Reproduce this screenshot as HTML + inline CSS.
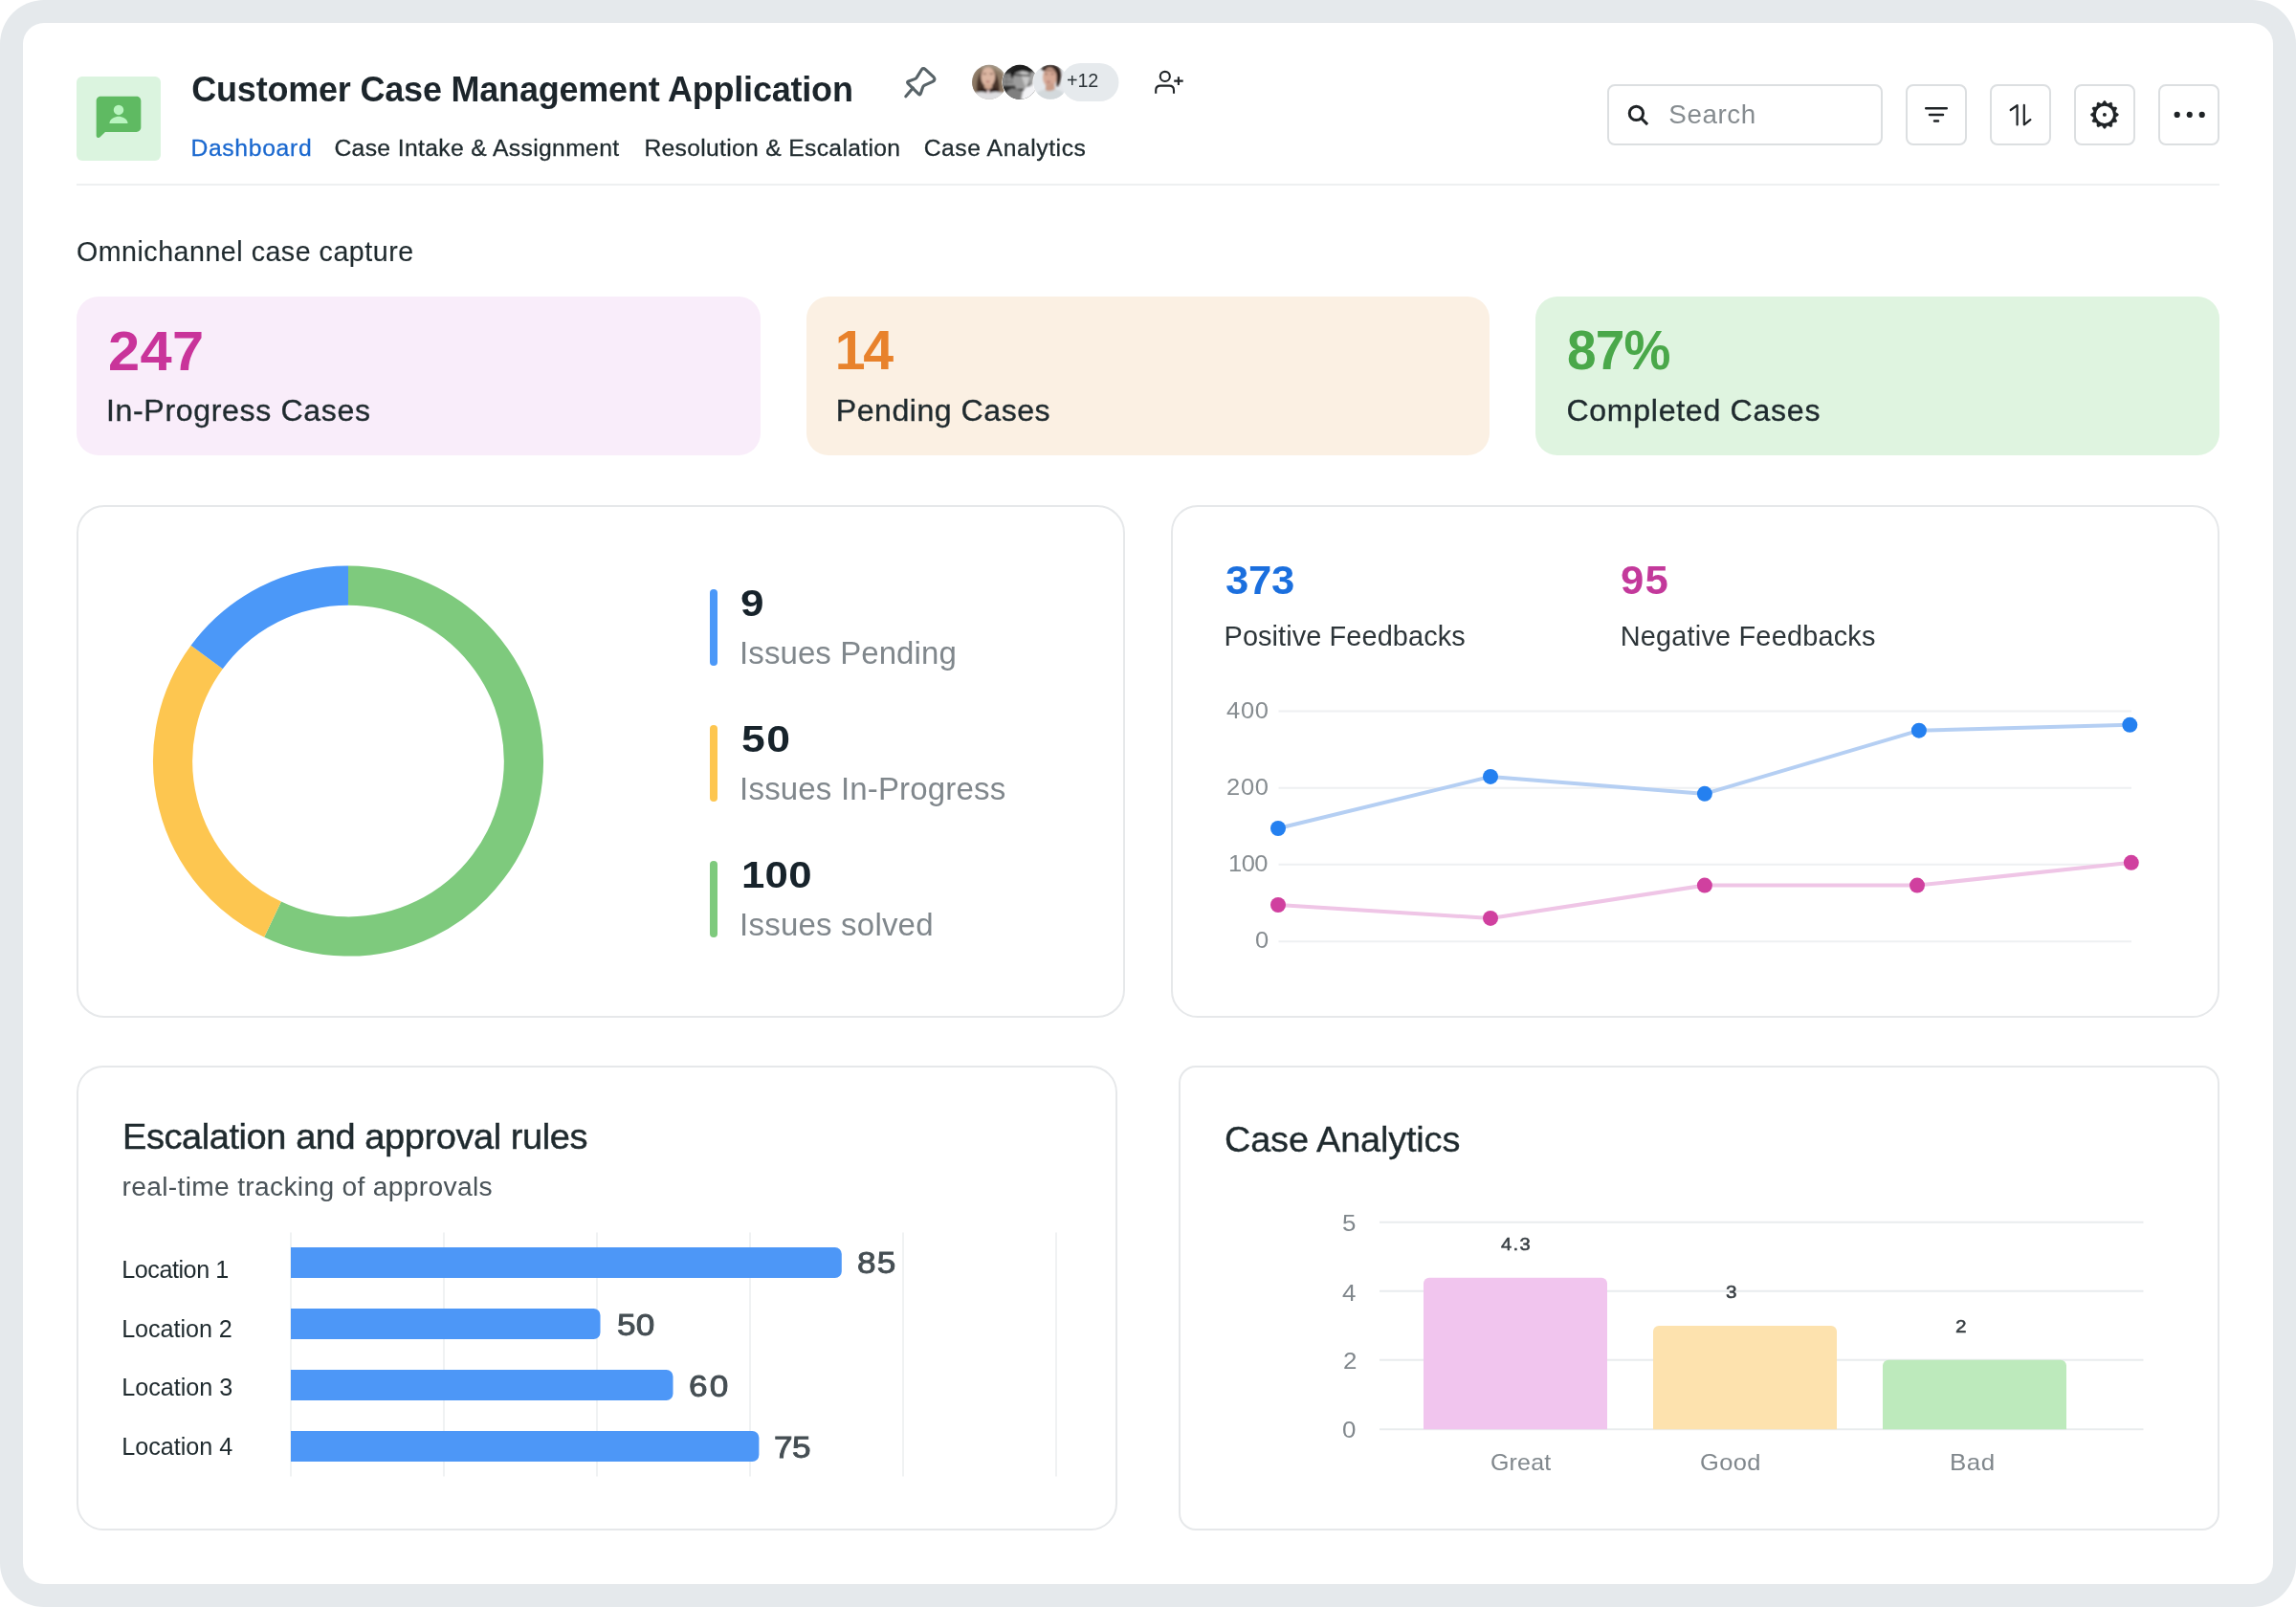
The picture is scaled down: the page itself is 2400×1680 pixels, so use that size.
<!DOCTYPE html>
<html lang="en">
<head>
<meta charset="utf-8">
<title>Customer Case Management Application</title>
<style>
*{box-sizing:border-box;margin:0;padding:0}
html,body{width:2400px;height:1680px;background:#fff;overflow:hidden}
body{font-family:'Liberation Sans',sans-serif;position:relative}
#frame{position:absolute;left:0;top:0;width:2400px;height:1680px;background:#e5e9ec;border-radius:46px}
#page{position:absolute;left:24px;top:24px;width:2352px;height:1632px;background:#fff;border-radius:22px}
#page>*{position:absolute}
#abs{left:-24px;top:-24px;width:2400px;height:1680px;will-change:transform}
#abs>*{position:absolute}
.t{position:absolute;transform-origin:0 50%;white-space:nowrap;line-height:1;font-family:'Liberation Sans',sans-serif}
.box{border-radius:8px;border:2px solid #dcdfe1;background:#fff}
.stat{border-radius:23px;top:309.6px;width:714.67px;height:166px}
.card{border:2px solid #e6e8ea;background:#fff}
svg{display:block;overflow:visible}

</style>
</head>
<body>
<div id="frame"><div id="page">
<div id="abs">
<!-- header -->
<div style="left:80px;top:80px;width:88px;height:88px;border-radius:6px;background:#dbf4df"></div>
<div style="left:80px;top:192px;width:2240px;height:2px;background:#eef0f1"></div>
<div class="box" style="left:1680px;top:88px;width:288px;height:64px"></div>
<div class="box" style="left:1992px;top:88px;width:64px;height:64px"></div>
<div class="box" style="left:2080px;top:88px;width:64px;height:64px"></div>
<div class="box" style="left:2168px;top:88px;width:64px;height:64px"></div>
<div class="box" style="left:2256px;top:88px;width:64px;height:64px"></div>
<!-- stat cards -->
<div class="stat" style="left:80px;background:#f9edfa"></div>
<div class="stat" style="left:842.67px;background:#fbf0e3"></div>
<div class="stat" style="left:1605.33px;background:#dff4e0"></div>
<!-- chart cards -->
<div class="card" style="left:80px;top:528px;width:1096px;height:535.6px;border-radius:29px"></div>
<div class="card" style="left:1224px;top:528px;width:1096px;height:535.6px;border-radius:28px"></div>
<div class="card" style="left:80px;top:1114.3px;width:1088px;height:485.8px;border-radius:28px"></div>
<div class="card" style="left:1232px;top:1114.3px;width:1088px;height:485.8px;border-radius:18px"></div>
<svg width="2400" height="1680" viewBox="0 0 2400 1680" style="left:0;top:0">
<defs>
<clipPath id="av1"><circle cx="1034" cy="85.8" r="18"/></clipPath>
<clipPath id="av2"><circle cx="1066" cy="85.8" r="18"/></clipPath>
<clipPath id="av3"><circle cx="1098" cy="85.8" r="18"/></clipPath>
<filter id="bl" x="-20%" y="-20%" width="140%" height="140%"><feGaussianBlur stdDeviation="0.9"/></filter>
</defs>
<!-- app icon : chat bubble with person -->
<g transform="translate(96 96) scale(2.3333)">
<path d="M20 2H4c-1.1 0-2 .9-2 2v15.6c0 .9 1.08 1.34 1.7.7L6 18h14c1.1 0 2-.9 2-2V4c0-1.1-.9-2-2-2z" fill="#5fba62"/>
<circle cx="12" cy="8.1" r="2.25" fill="#b9f5c0"/>
<path d="M7.9 14.1c0-2.1 2.7-3.1 4.1-3.1s4.1 1 4.1 3.1z" fill="#b9f5c0"/>
</g>
<!-- pin -->
<g fill="none" stroke="#586368" stroke-width="3.1" stroke-linecap="round" stroke-linejoin="round">
<path d="M963.2 73 Q964.8 70.4 967.4 72.6 L976 80.6 Q978.3 83.5 974.8 85.4 L966.5 89.2 Q965 90 964.5 91.5 L962.3 98 Q961.6 99.6 960.3 98.4 L949 87.2 Q947.9 85.7 949.6 85 L956.2 82.6 Q957.8 82 958.5 80.6 Z"/>
<path d="M954.3 92 L946.8 100.8"/>
</g>
<!-- avatars -->
<g clip-path="url(#av1)">
<rect x="1014" y="66" width="40" height="40" fill="#b4ada2"/>
<g filter="url(#bl)">
<path d="M1016 101 C1013 84 1018 70 1030 68.5 C1045 67 1052 76 1051 99 L1044 100 L1033 96 L1023 100 Z" fill="#8b7763"/>
<path d="M1021 98 C1020 84 1023 73 1032 72.5 C1042 73 1045 84 1045 97 L1033 98 Z" fill="#4a352b"/>
<path d="M1024 72 Q1032 66 1044 72 L1049 84 Q1046 72 1036 71 Z" fill="#a79a88"/>
<ellipse cx="1032.8" cy="80.5" rx="7.4" ry="10.2" fill="#dcb6a2"/>
<path d="M1029 88 H1037 V94 H1029 Z" fill="#d2a893"/>
<path d="M1023 93 Q1028 89.5 1033 94 Q1038 89.5 1044 93 L1041 97 L1033 99 L1025 97 Z" fill="#33201f"/>
<path d="M1014 106 V99 Q1023 94 1033 97.5 Q1043 94 1054 99 V106 Z" fill="#dedee1"/>
<path d="M1031.2 94.5 L1033 99.5 L1034.8 94.5 Z" fill="#f3e4e6"/>
<ellipse cx="1032.6" cy="85.3" rx="2.3" ry="0.9" fill="#b06d68"/>
<path d="M1027.5 77.2 h3.6 M1034.6 77.2 h3.6" stroke="#6a4a3c" stroke-width="1"/>
</g>
</g>
<circle cx="1066" cy="85.8" r="18.6" fill="#fff"/>
<g clip-path="url(#av2)">
<rect x="1046" y="66" width="40" height="40" fill="#2a2a2a"/>
<g filter="url(#bl)">
<rect x="1046" y="77" width="14" height="13" fill="#909090"/>
<path d="M1046 80 H1059 M1046 85.5 H1059 M1052 77 V90" stroke="#6a6a6a" stroke-width="1"/>
<rect x="1074" y="75" width="12" height="14" fill="#a5a5a5"/>
<path d="M1076 75 V89" stroke="#444" stroke-width="1.6"/>
<path d="M1058 77 Q1060 69 1069 69.5 Q1077 71 1077 80 Q1077 88 1072 93 L1062 93 Q1058 86 1058 77 Z" fill="#9c9c9c"/>
<path d="M1066 74 Q1073 73 1076 79 Q1076 86 1072 91 Q1069 84 1066 74 Z" fill="#c9c9c9"/>
<path d="M1056 78 Q1058 67 1069 68 Q1078 69.5 1078 77 Q1070 72 1061 76.5 Q1059 79 1058.5 83 Z" fill="#1b1b1b"/>
<path d="M1060 78.2 L1077 79" stroke="#1e1e1e" stroke-width="1.5"/>
<path d="M1048 106 Q1049 95 1058 92 L1069 95 L1067 106 Z" fill="#7e7e7e"/>
<path d="M1069 95 L1073 91 L1086 86 V106 H1067 Z" fill="#f3f3f6"/>
</g>
</g>
<circle cx="1098" cy="85.8" r="18.6" fill="#fff"/>
<g clip-path="url(#av3)">
<rect x="1078" y="66" width="40" height="40" fill="#e4e7eb"/>
<g filter="url(#bl)">
<path d="M1088 72 Q1094 65.5 1104 68.5 Q1111 72 1108.5 84 Q1107 90 1104.5 91 L1104 78 L1091 74 Z" fill="#2e211d"/>
<ellipse cx="1097.3" cy="80.8" rx="7.2" ry="10.3" fill="#d6a996"/>
<path d="M1090.5 75 Q1097 70.5 1104 75.5 Q1097 73 1090.5 75 Z" fill="#5a3e33"/>
<path d="M1093.5 88 L1102 87 L1103 96 L1092.5 96 Z" fill="#c99c88"/>
<path d="M1080 106 Q1081 96 1091 93.5 Q1097.5 97 1103.5 93 Q1113 95 1116 106 Z" fill="#d3d9dc"/>
<ellipse cx="1096" cy="85.6" rx="2.1" ry="0.85" fill="#b0706a"/>
<path d="M1092 77.4 h3.2 M1098.6 77.4 h3.2" stroke="#6d4a3e" stroke-width="0.9"/>
</g>
</g>
<rect x="1109.5" y="66" width="60" height="40" rx="20" fill="#e6eaed"/>
<!-- add person -->
<g fill="none" stroke="#222629" stroke-width="2.1" stroke-linecap="butt">
<circle cx="1217.8" cy="79.9" r="5.05"/>
<path d="M1208.2 97.8 V94.4 Q1208.2 89.6 1213 89.6 H1222.2 Q1227 89.6 1227 94.4 V97.8"/>
<path d="M1227.2 84.6 H1236.7 M1231.9 80.2 V89"/>
</g>
<!-- search icon -->
<g fill="none" stroke="#1f2326" stroke-width="3">
<circle cx="1710.4" cy="118.4" r="7.15"/>
<path d="M1715.5 123.5 L1722.1 130.1"/>
</g>
<!-- filter -->
<g fill="none" stroke="#1f2326" stroke-width="2.5" stroke-linecap="round">
<path d="M2013.2 113.3 H2034.8 M2017 120 H2031 M2022 126.6 H2026"/>
</g>
<!-- sort -->
<g fill="none" stroke="#1f2326" stroke-width="2.2" stroke-linecap="round" stroke-linejoin="round">
<path d="M2108.6 130.4 V110.2 L2101.7 115"/>
<path d="M2115.8 109.9 V130.3 L2122.4 125.2"/>
</g>
<!-- gear -->
<g transform="translate(2199.9 119.9)">
<circle r="10.6" fill="none" stroke="#1f2326" stroke-width="3"/>
<circle r="1.95" fill="#1f2326"/>
<g fill="#1f2326" stroke="#1f2326" stroke-width="0.4" stroke-linejoin="round">
<path transform="rotate(0)" d="M-2.5 -11.6 L-0.95 -14.2 Q0 -15 0.95 -14.2 L2.5 -11.6 Z"/>
<path transform="rotate(30)" d="M-2.5 -11.6 L-0.95 -14.2 Q0 -15 0.95 -14.2 L2.5 -11.6 Z"/>
<path transform="rotate(60)" d="M-2.5 -11.6 L-0.95 -14.2 Q0 -15 0.95 -14.2 L2.5 -11.6 Z"/>
<path transform="rotate(90)" d="M-2.5 -11.6 L-0.95 -14.2 Q0 -15 0.95 -14.2 L2.5 -11.6 Z"/>
<path transform="rotate(120)" d="M-2.5 -11.6 L-0.95 -14.2 Q0 -15 0.95 -14.2 L2.5 -11.6 Z"/>
<path transform="rotate(150)" d="M-2.5 -11.6 L-0.95 -14.2 Q0 -15 0.95 -14.2 L2.5 -11.6 Z"/>
<path transform="rotate(180)" d="M-2.5 -11.6 L-0.95 -14.2 Q0 -15 0.95 -14.2 L2.5 -11.6 Z"/>
<path transform="rotate(210)" d="M-2.5 -11.6 L-0.95 -14.2 Q0 -15 0.95 -14.2 L2.5 -11.6 Z"/>
<path transform="rotate(240)" d="M-2.5 -11.6 L-0.95 -14.2 Q0 -15 0.95 -14.2 L2.5 -11.6 Z"/>
<path transform="rotate(270)" d="M-2.5 -11.6 L-0.95 -14.2 Q0 -15 0.95 -14.2 L2.5 -11.6 Z"/>
<path transform="rotate(300)" d="M-2.5 -11.6 L-0.95 -14.2 Q0 -15 0.95 -14.2 L2.5 -11.6 Z"/>
<path transform="rotate(330)" d="M-2.5 -11.6 L-0.95 -14.2 Q0 -15 0.95 -14.2 L2.5 -11.6 Z"/>
</g>
</g>
<!-- more -->
<g fill="#1f2326"><circle cx="2275.7" cy="119.9" r="3.1"/><circle cx="2288.7" cy="119.9" r="3.1"/><circle cx="2301.7" cy="119.9" r="3.1"/></g>
<!-- donut -->
<path d="M364.00 612.20 A183.4 183.4 0 1 1 285.04 961.13" fill="none" stroke="#7eca7d" stroke-width="41.2"/>
<path d="M285.04 961.13 A183.4 183.4 0 0 1 216.19 687.02" fill="none" stroke="#fdc650" stroke-width="41.2"/>
<path d="M216.19 687.02 A183.4 183.4 0 0 1 364.00 612.20" fill="none" stroke="#4b98f8" stroke-width="41.2"/>
<rect x="742" y="616" width="8" height="80" rx="4" fill="#4b98f8"/>
<rect x="742" y="758" width="8" height="80" rx="4" fill="#fdc650"/>
<rect x="742" y="900" width="8" height="80" rx="4" fill="#7eca7d"/>
<!-- line chart -->
<path d="M1336.5 743.5 H2228" stroke="#eef0f2" stroke-width="2"/>
<path d="M1336.5 823.8 H2228" stroke="#eef0f2" stroke-width="2"/>
<path d="M1336.5 903.8 H2228" stroke="#eef0f2" stroke-width="2"/>
<path d="M1336.5 984.2 H2228" stroke="#eef0f2" stroke-width="2"/>
<path d="M1336 866 L1558 811.9 L1781.9 829.8 L2005.9 763.7 L2226.3 757.8" fill="none" stroke="#b5cff3" stroke-width="4" stroke-linejoin="round"/>
<path d="M1336 946 L1558 959.9 L1781.9 925.6 L2004 925.6 L2227.8 901.8" fill="none" stroke="#efc5e6" stroke-width="4" stroke-linejoin="round"/>
<circle cx="1336" cy="866" r="8" fill="#2480f0"/>
<circle cx="1558" cy="811.9" r="8" fill="#2480f0"/>
<circle cx="1781.9" cy="829.8" r="8" fill="#2480f0"/>
<circle cx="2005.9" cy="763.7" r="8" fill="#2480f0"/>
<circle cx="2226.3" cy="757.8" r="8" fill="#2480f0"/>
<circle cx="1336" cy="946" r="8" fill="#d0409f"/>
<circle cx="1558" cy="959.9" r="8" fill="#d0409f"/>
<circle cx="1781.9" cy="925.6" r="8" fill="#d0409f"/>
<circle cx="2004" cy="925.6" r="8" fill="#d0409f"/>
<circle cx="2227.8" cy="901.8" r="8" fill="#d0409f"/>
<!-- hbar chart -->
<path d="M304 1288.5 V1543.5" stroke="#f0f2f3" stroke-width="2"/>
<path d="M464 1288.5 V1543.5" stroke="#f0f2f3" stroke-width="2"/>
<path d="M624 1288.5 V1543.5" stroke="#f0f2f3" stroke-width="2"/>
<path d="M784 1288.5 V1543.5" stroke="#f0f2f3" stroke-width="2"/>
<path d="M944 1288.5 V1543.5" stroke="#f0f2f3" stroke-width="2"/>
<path d="M1104 1288.5 V1543.5" stroke="#f0f2f3" stroke-width="2"/>
<path d="M304 1304 H872.8 a7 7 0 0 1 7 7 V1329 a7 7 0 0 1 -7 7 H304 Z" fill="#4d97f7"/>
<path d="M304 1368 H620.5 a7 7 0 0 1 7 7 V1393 a7 7 0 0 1 -7 7 H304 Z" fill="#4d97f7"/>
<path d="M304 1432 H696.5 a7 7 0 0 1 7 7 V1457 a7 7 0 0 1 -7 7 H304 Z" fill="#4d97f7"/>
<path d="M304 1496 H786.4 a7 7 0 0 1 7 7 V1521 a7 7 0 0 1 -7 7 H304 Z" fill="#4d97f7"/>
<!-- column chart -->
<path d="M1442 1277.7 H2240.5" stroke="#e9ecee" stroke-width="2"/>
<path d="M1442 1349.7 H2240.5" stroke="#e9ecee" stroke-width="2"/>
<path d="M1442 1421.7 H2240.5" stroke="#e9ecee" stroke-width="2"/>
<path d="M1442 1494.2 H2240.5" stroke="#e9ecee" stroke-width="2"/>
<path d="M1488 1494.2 V1341.8 a6 6 0 0 1 6 -6 H1674 a6 6 0 0 1 6 6 V1494.2 Z" fill="#f1c5ee"/>
<path d="M1728 1494.2 V1391.9 a6 6 0 0 1 6 -6 H1914 a6 6 0 0 1 6 6 V1494.2 Z" fill="#fde2ae"/>
<path d="M1968 1494.2 V1427.7 a6 6 0 0 1 6 -6 H2154 a6 6 0 0 1 6 6 V1494.2 Z" fill="#bdeabc"/>
</svg>

<div class="t" style="left:200.28px;top:75.93px;font-size:36px;color:#1c252b;font-weight:700;letter-spacing:-0.205px;">Customer Case Management Application</div>
<div class="t" style="left:199.40px;top:143.39px;font-size:24.7px;color:#1a68cf;letter-spacing:0.688px;-webkit-text-stroke:0.3px;">Dashboard</div>
<div class="t" style="left:349.40px;top:143.39px;font-size:24.7px;color:#1f2a2e;letter-spacing:0.357px;-webkit-text-stroke:0.3px;">Case Intake &amp; Assignment</div>
<div class="t" style="left:673.40px;top:143.39px;font-size:24.7px;color:#1f2a2e;letter-spacing:0.312px;-webkit-text-stroke:0.3px;">Resolution &amp; Escalation</div>
<div class="t" style="left:965.70px;top:143.39px;font-size:24.7px;color:#1f2a2e;letter-spacing:0.561px;-webkit-text-stroke:0.3px;">Case Analytics</div>
<div class="t" style="left:1115.00px;top:75.02px;font-size:19.7px;color:#2b3338;letter-spacing:-0.080px;">+12</div>
<div class="t" style="left:1744.33px;top:105.67px;font-size:27.8px;color:#868c90;letter-spacing:0.549px;">Search</div>
<div class="t" style="left:79.96px;top:249.39px;font-size:28.6px;color:#1f2a2e;letter-spacing:0.521px;-webkit-text-stroke:0.15px;">Omnichannel case capture</div>
<div class="t" style="left:112.54px;top:338.60px;font-size:57.3px;color:#c9349a;font-weight:700;letter-spacing:0.313px;transform:scaleX(1.04);">247</div>
<div class="t" style="left:110.99px;top:413.33px;font-size:32.1px;color:#1f2a2e;letter-spacing:0.650px;-webkit-text-stroke:0.35px;">In-Progress Cases</div>
<div class="t" style="left:872.72px;top:338.30px;font-size:57.3px;color:#e8822c;font-weight:700;letter-spacing:-2.318px;">14</div>
<div class="t" style="left:873.79px;top:413.13px;font-size:32.1px;color:#1f2a2e;letter-spacing:0.525px;-webkit-text-stroke:0.35px;">Pending Cases</div>
<div class="t" style="left:1638.18px;top:338.40px;font-size:57.3px;color:#4aa84a;font-weight:700;letter-spacing:-0.937px;transform:scaleX(0.96);">87%</div>
<div class="t" style="left:1637.40px;top:413.13px;font-size:32.1px;color:#1f2a2e;letter-spacing:0.719px;-webkit-text-stroke:0.35px;">Completed Cases</div>
<div class="t" style="left:774.32px;top:612.03px;font-size:38px;color:#17232b;font-weight:700;transform:scaleX(1.16);">9</div>
<div class="t" style="left:773.12px;top:665.77px;font-size:33px;color:#80878c;letter-spacing:0.075px;">Issues Pending</div>
<div class="t" style="left:775.01px;top:754.33px;font-size:38px;color:#17232b;font-weight:700;letter-spacing:1.234px;transform:scaleX(1.17);">50</div>
<div class="t" style="left:773.12px;top:807.77px;font-size:33px;color:#80878c;letter-spacing:0.177px;">Issues In-Progress</div>
<div class="t" style="left:774.77px;top:896.33px;font-size:38px;color:#17232b;font-weight:700;letter-spacing:0.257px;transform:scaleX(1.15);">100</div>
<div class="t" style="left:773.12px;top:949.77px;font-size:33px;color:#80878c;letter-spacing:0.208px;">Issues solved</div>
<div class="t" style="left:1281.12px;top:586.35px;font-size:42px;color:#1b6fde;font-weight:700;letter-spacing:-0.292px;transform:scaleX(1.04);">373</div>
<div class="t" style="left:1279.54px;top:651.24px;font-size:28.9px;color:#2d3539;letter-spacing:0.098px;">Positive Feedbacks</div>
<div class="t" style="left:1694.34px;top:586.25px;font-size:42px;color:#c3399b;font-weight:700;letter-spacing:1.219px;transform:scaleX(1.04);">95</div>
<div class="t" style="left:1693.74px;top:651.24px;font-size:28.9px;color:#2d3539;letter-spacing:0.194px;">Negative Feedbacks</div>
<div class="t" style="left:1281.75px;top:732.26px;font-size:23.2px;color:#868c90;letter-spacing:0.665px;transform:scaleX(1.1);">400</div>
<div class="t" style="left:1281.79px;top:811.96px;font-size:23.2px;color:#868c90;letter-spacing:0.647px;transform:scaleX(1.1);">200</div>
<div class="t" style="left:1284.23px;top:891.86px;font-size:23.2px;color:#868c90;letter-spacing:-0.462px;transform:scaleX(1.1);">100</div>
<div class="t" style="left:1311.60px;top:971.76px;font-size:23.2px;color:#868c90;transform:scaleX(1.1);">0</div>
<div class="t" style="left:127.63px;top:1170.90px;font-size:36.5px;color:#1f2a2e;letter-spacing:-0.397px;transform:scaleX(1.04);-webkit-text-stroke:0.45px;">Escalation and approval rules</div>
<div class="t" style="left:127.54px;top:1225.83px;font-size:28.2px;color:#4a5358;letter-spacing:0.317px;">real-time tracking of approvals</div>
<div class="t" style="left:127.20px;top:1314.77px;font-size:25.2px;color:#1f2a2e;letter-spacing:-0.464px;">Location 1</div>
<div class="t" style="left:127.20px;top:1376.77px;font-size:25.2px;color:#1f2a2e;letter-spacing:-0.075px;">Location 2</div>
<div class="t" style="left:127.20px;top:1438.47px;font-size:25.2px;color:#1f2a2e;letter-spacing:-0.031px;">Location 3</div>
<div class="t" style="left:127.20px;top:1500.47px;font-size:25.2px;color:#1f2a2e;letter-spacing:-0.009px;">Location 4</div>
<div class="t" style="left:896.00px;top:1304.41px;font-size:32px;color:#454e53;letter-spacing:0.976px;transform:scaleX(1.1);-webkit-text-stroke:0.9px;">85</div>
<div class="t" style="left:644.70px;top:1368.71px;font-size:32px;color:#454e53;letter-spacing:0.112px;transform:scaleX(1.1);-webkit-text-stroke:0.9px;">50</div>
<div class="t" style="left:719.55px;top:1433.01px;font-size:32px;color:#454e53;letter-spacing:1.885px;transform:scaleX(1.1);-webkit-text-stroke:0.9px;">60</div>
<div class="t" style="left:809.25px;top:1496.51px;font-size:32px;color:#454e53;letter-spacing:-0.433px;transform:scaleX(1.1);-webkit-text-stroke:0.9px;">75</div>
<div class="t" style="left:1280.22px;top:1173.75px;font-size:36.8px;color:#1f2a2e;letter-spacing:-0.166px;transform:scaleX(1.03);-webkit-text-stroke:0.3px;">Case Analytics</div>
<div class="t" style="left:1403.31px;top:1267.28px;font-size:24px;color:#80878c;transform:scaleX(1.08);">5</div>
<div class="t" style="left:1402.98px;top:1339.68px;font-size:24px;color:#80878c;transform:scaleX(1.08);">4</div>
<div class="t" style="left:1403.52px;top:1411.38px;font-size:24px;color:#80878c;transform:scaleX(1.08);">2</div>
<div class="t" style="left:1403.20px;top:1483.38px;font-size:24px;color:#80878c;transform:scaleX(1.08);">0</div>
<div class="t" style="left:1568.98px;top:1291.25px;font-size:19.2px;color:#3a4045;letter-spacing:1.291px;transform:scaleX(1.05);-webkit-text-stroke:0.55px;">4.3</div>
<div class="t" style="left:1804.48px;top:1341.15px;font-size:19.2px;color:#3a4045;transform:scaleX(1.08);-webkit-text-stroke:0.55px;">3</div>
<div class="t" style="left:2044.22px;top:1377.35px;font-size:19.2px;color:#3a4045;transform:scaleX(1.08);-webkit-text-stroke:0.55px;">2</div>
<div class="t" style="left:1557.75px;top:1517.48px;font-size:24px;color:#80878c;letter-spacing:0.168px;transform:scaleX(1.04);">Great</div>
<div class="t" style="left:1777.18px;top:1517.48px;font-size:24px;color:#80878c;letter-spacing:0.337px;transform:scaleX(1.06);">Good</div>
<div class="t" style="left:2038.20px;top:1517.48px;font-size:24px;color:#80878c;letter-spacing:0.461px;transform:scaleX(1.08);">Bad</div>
</div>

</div></div>
</body>
</html>
